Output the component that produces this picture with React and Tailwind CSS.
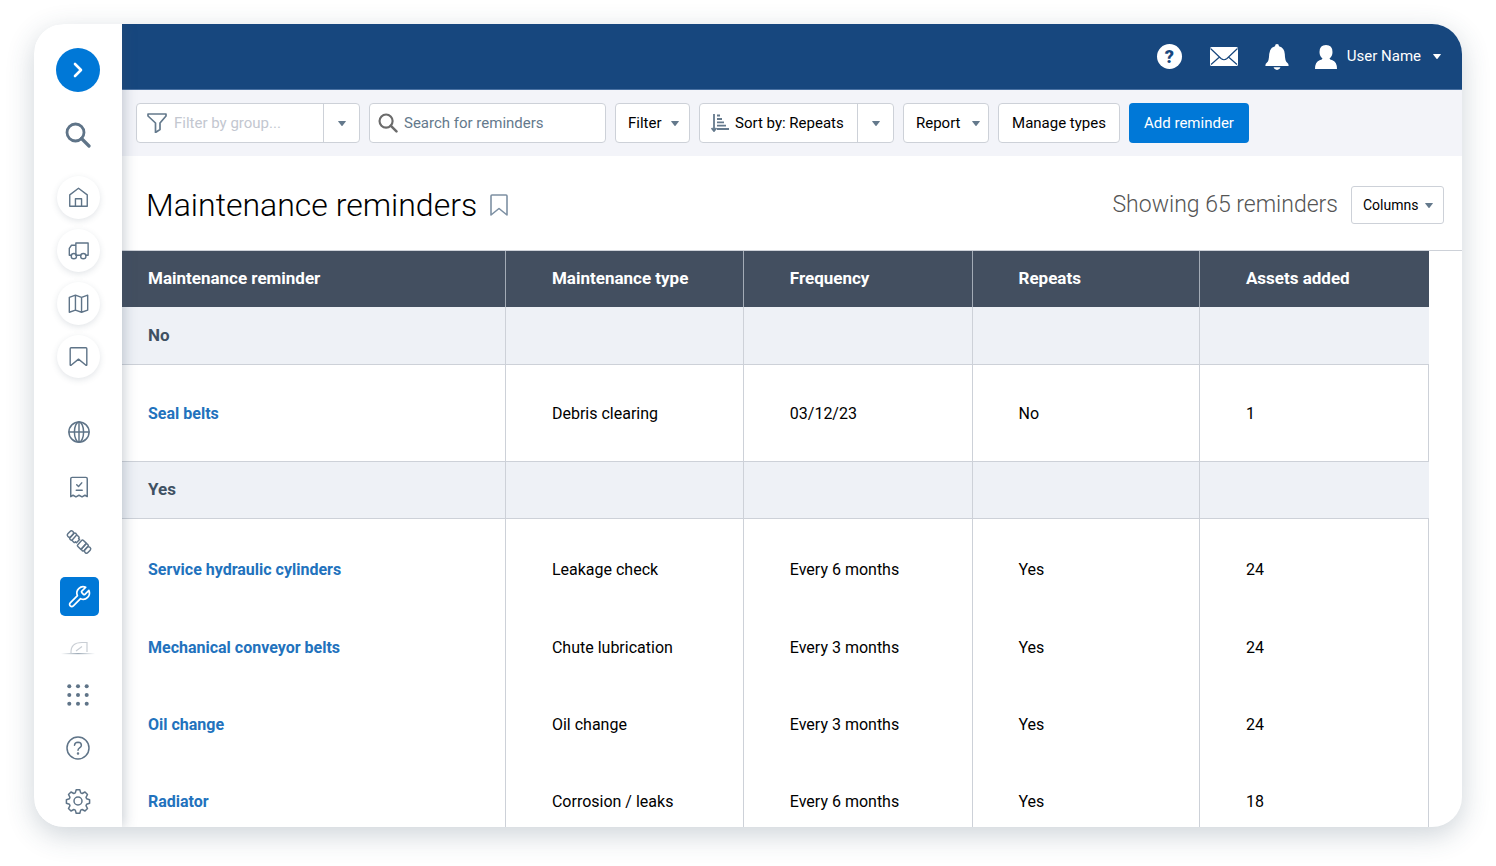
import React from "react";

const topNav = ["home", "truck", "map", "bookmark"];
const midNav = ["globe", "receipt", "plug", "wrench"];
const bottomNav = ["grid", "help", "gear"];

const labels = {
  home: "Home",
  truck: "Vehicles",
  map: "Map",
  bookmark: "Bookmarks",
  globe: "Global",
  receipt: "Compliance",
  plug: "Integrations",
  wrench: "Maintenance",
  grid: "Apps",
  help: "Help",
  gear: "Settings",
};

const icons = {
  home: (
    <>
      <path d="M2 9 12 1.5 22 9v13H2z" />
      <path d="M8.500 22v-8.500h7V22" />
    </>
  ),
  truck: (
    <>
      <path d="M9 17.500V3.500h14v14h-2.500M3.700 17.500H1.500V9.500L4 6h5M9.500 17.500h5" />
      <circle cx="6.700" cy="18.500" r="3" />
      <circle cx="17.500" cy="18.500" r="3" />
    </>
  ),
  map: (
    <path d="M1.500 5v17l7-2.500 7 2.500 7-2.500V2.500L15.500 5l-7-2.500zM8.500 2.500v17M15.500 5v17" />
  ),
  bookmark: <path d="M2.500 3q0-1 1-1h17q1 0 1 1v18.500q0 1-1 .500L12 15l-8.500 7q-1 .500-1-.500z" />,
  globe: (
    <>
      <circle cx="12" cy="12" r="11" />
      <ellipse cx="12" cy="12" rx="5" ry="11" />
      <path d="M1 12h22M12 1v22" />
    </>
  ),
  receipt: (
    <>
      <path d="M3 22.500V3q0-1.500 1.500-1.500h15Q21 1.500 21 3v19.500l-2.500-1.500-3.200 1.800L12 21l-3.300 1.800L5.500 21z" />
      <path d="m9.500 9.500 2 2 3.500-4M9 15.500h6.500" />
    </>
  ),
  plug: (
    <g transform="rotate(43 12 12)">
      <rect x="-3" y="8.200" width="4.500" height="7.600" rx="2" />
      <rect x="1.500" y="7.500" width="3.500" height="9" rx="1.500" />
      <path d="M5 8h3q1 0 1 1v.5h1.500v5H9v.5q0 1-1 1H5" />
      <path d="M19 7.500h-4.500q-1.500 0-1.500 1.500v6q0 1.500 1.500 1.500H19z" />
      <rect x="19" y="7.500" width="3.500" height="9" rx="1.500" />
      <rect x="22.500" y="8.200" width="4.500" height="7.600" rx="2" />
    </g>
  ),
  wrench: (
    <path
      transform="translate(-1.700 -1.500) scale(1.140)"
      d="M14.700 6.300a1 1 0 0 0 0 1.400l1.600 1.600a1 1 0 0 0 1.400 0l3.770-3.770a6 6 0 0 1-7.940 7.940l-6.910 6.910a2.120 2.120 0 0 1-3-3l6.910-6.910a6 6 0 0 1 7.940-7.940l-3.760 3.760z"
    />
  ),
  grid: (
    <g fill="currentColor" stroke="none">
      {[2.500, 12, 21.500].map((y) =>
        [2.500, 12, 21.500].map((x) => <circle key={`${x}-${y}`} cx={x} cy={y} r="2.200" />)
      )}
    </g>
  ),
  help: (
    <>
      <circle cx="12" cy="12" r="11" />
      <path d="M8.500 9.200Q8.800 6.200 12 6.200q3.400.1 3.400 3 0 1.500-1.800 2.600Q12 12.800 12 14.300" />
      <circle cx="12" cy="17.500" r=".5" fill="currentColor" />
    </>
  ),
  gear: (
    <>
      <circle cx="12" cy="12" r="4" />
      <path d="M10.200.800h3.600l.9 3.100 1.500.6 2.800-1.500 2.500 2.500L20 8.300l.6 1.500 3 .900v3.600l-3 .9-.6 1.500 1.500 2.800-2.500 2.500-2.800-1.500-1.500.6-.9 3.100h-3.600l-.9-3.100-1.500-.6L5 22l-2.500-2.500L4 16.700l-.6-1.500-3-.9v-3.600l3-.9.6-1.500-1.500-2.800L5 3l2.800 1.500 1.500-.6z" />
    </>
  ),
};

const Icon = ({ name, className, strokeWidth = 1.6 }) => (
  <svg
    viewBox="0 0 24 24"
    className={className}
    fill="none"
    stroke="currentColor"
    strokeWidth={strokeWidth}
    strokeLinejoin="round"
    strokeLinecap="round"
    overflow="visible"
    aria-hidden="true"
  >
    {icons[name]}
  </svg>
);

const Search = ({ className }) => (
  <svg viewBox="0 0 26 26" className={className} fill="none" stroke="currentColor" aria-hidden="true">
    <circle cx="10.500" cy="10.500" r="8.500" strokeWidth="2.800" />
    <path d="m16.500 16.500 7.500 7.500" strokeWidth="3.200" strokeLinecap="round" />
  </svg>
);

const Caret = ({ className = "text-[#64798c]" }) => (
  <svg viewBox="0 0 8 5" className={`h-[5px] w-2 shrink-0 ${className}`} fill="currentColor" aria-hidden="true">
    <path d="M.5 0h7q.6 0 .3.500L4.500 4.700q-.5.500-1 0L.2.500Q0 0 .5 0z" />
  </svg>
);

const Sidebar = () => (
  <aside className="relative z-10 flex w-[88px] shrink-0 flex-col items-center bg-white pt-6 text-[#5f7488] shadow-[2px_0_12px_rgba(60,80,100,0.28)]">
    <button
      aria-label="Expand menu"
      className="flex h-11 w-11 shrink-0 items-center justify-center rounded-full bg-[#0078d7] text-white"
    >
      <svg viewBox="0 0 10 16" className="h-4 w-[10px]" fill="none" stroke="currentColor" strokeWidth="2.600" strokeLinecap="round" strokeLinejoin="round">
        <path d="m2 2 6 6-6 6" />
      </svg>
    </button>
    <button aria-label="Search" className="mt-[30px] shrink-0">
      <Search className="h-[26px] w-[26px]" />
    </button>
    <nav aria-label="Main" className="mt-7 flex flex-col gap-[10px]">
      {topNav.map((name) => (
        <a
          key={name}
          href="#"
          aria-label={labels[name]}
          className="flex h-[43px] w-[43px] items-center justify-center rounded-full bg-white shadow-[0_2px_6px_rgba(60,80,100,0.15)]"
        >
          <Icon name={name} className="h-[21px] w-[21px]" />
        </a>
      ))}
    </nav>
    <nav aria-label="Tools" className="mt-[34px] ml-[2px] flex flex-col gap-4">
      {midNav.map((name) => (
        <a
          key={name}
          href="#"
          aria-label={labels[name]}
          className={
            name === "wrench"
              ? "flex h-[39px] w-[39px] items-center justify-center rounded-[5px] bg-[#0078d7] text-white"
              : "flex h-[39px] w-[39px] items-center justify-center"
          }
        >
          <Icon name={name} className="h-[22px] w-[22px]" />
        </a>
      ))}
    </nav>
    <svg viewBox="0 0 34 14" className="mt-[25px] h-[14px] w-[34px] shrink-0" fill="none" aria-hidden="true">
      <defs>
        <linearGradient id="edge">
          <stop offset="0" stopColor="#5f7488" stopOpacity="0" />
          <stop offset=".5" stopColor="#5f7488" stopOpacity=".6" />
          <stop offset="1" stopColor="#5f7488" stopOpacity="0" />
        </linearGradient>
      </defs>
      <path d="M10 12Q9.500 1.500 21 1.500h5V11M15 10l6-4.500" stroke="#c9ced4" strokeWidth="1.200" />
      <rect y="12" width="34" height="1.200" fill="url(#edge)" />
    </svg>
    <nav aria-label="Support" className="mt-7 flex flex-col gap-[29px]">
      {bottomNav.map((name) => (
        <a key={name} href="#" aria-label={labels[name]}>
          <Icon name={name} className={name === "grid" ? "m-[1px] h-[22px] w-[22px]" : "h-6 w-6"} strokeWidth={1.5} />
        </a>
      ))}
    </nav>
  </aside>
);

const Header = () => (
  <header className="flex h-[66px] shrink-0 items-center justify-end border-b border-[#4a72a3] bg-[#17477e] pr-[21px] text-white">
    <button aria-label="Help" className="flex h-[25px] w-[25px] items-center justify-center rounded-full bg-white text-lg font-black text-[#17477e]">
      ?
    </button>
    <button aria-label="Messages" className="ml-7">
      <svg viewBox="0 0 28 19" className="h-[19px] w-7">
        <rect width="28" height="19" rx="1.500" fill="#fff" />
        <path d="m.5 1.500 10.500 10q3 2.500 6 0l10.500-10M1 17.500 9.500 10M27 17.500 18.500 10" fill="none" stroke="#17477e" strokeWidth="1.200" />
      </svg>
    </button>
    <button aria-label="Notifications" className="ml-[27px]">
      <svg viewBox="0 0 24 26" className="h-[26px] w-6" fill="#fff">
        <path d="M12 0q2 0 2 2.300 5.500 1.500 5.800 7.700.2 7 2.200 8.500 2 1.500 1.500 3.500H.5Q0 20 2 18.500 4 17 4.200 10 4.500 3.800 10 2.300 10 0 12 0zM8.500 23.300h7q-.8 2.700-3.500 2.700t-3.500-2.700z" />
      </svg>
    </button>
    <button className="ml-[26px] flex items-center text-[15px]">
      <svg viewBox="0 0 22 24" className="h-6 w-[22px]" fill="#fff" aria-hidden="true">
        <path d="M11 0q6.500 0 6.500 7 0 4-3 6.500 0 1 3 1.800 4.500 1.700 4.500 8.700H0q0-7 4.500-8.700 3-.8 3-1.800-3-2.500-3-6.500 0-7 6.500-7z" />
      </svg>
      <span className="ml-[10px]">User Name</span>
      <Caret className="ml-3 text-white" />
    </button>
  </header>
);

const box = "flex h-10 items-center rounded-[4px] border border-[#cdd1d8] bg-white";

const Toolbar = () => (
  <div className="flex h-[66px] shrink-0 items-center gap-[9px] bg-[#f3f4f9] pl-[14px] pr-5 text-[15px] text-black">
    <div className={`${box} w-56`}>
      <svg viewBox="0 0 20 20" className="ml-[10px] h-5 w-5 shrink-0 text-[#64798c]" fill="none" stroke="currentColor" strokeWidth="1.700" strokeLinejoin="round" aria-hidden="true">
        <path d="M1 1h18v2l-6 7v6.500L8.500 19.500V10L1 3z" />
      </svg>
      <input
        aria-label="Filter by group"
        placeholder="Filter by group..."
        className="ml-[7px] min-w-0 flex-1 bg-transparent outline-none placeholder:text-[#c3c7d0]"
      />
      <button aria-label="Choose group" className="flex h-full w-9 items-center justify-center border-l border-[#cdd1d8]">
        <Caret />
      </button>
    </div>
    <div className={`${box} w-[237px]`}>
      <Search className="ml-2 h-5 w-5 shrink-0 text-[#6b6b6b]" />
      <input
        type="search"
        aria-label="Search for reminders"
        placeholder="Search for reminders"
        className="ml-[6px] min-w-0 flex-1 bg-transparent outline-none placeholder:text-[#64798c]"
      />
    </div>
    <button className={`${box} w-[75px] justify-between pl-3 pr-[10px]`}>
      Filter
      <Caret />
    </button>
    <div className={`${box} w-[195px]`}>
      <button className="flex h-full flex-1 items-center whitespace-nowrap pl-[11px]">
        <svg viewBox="0 0 18 18" className="mr-[6px] h-[18px] w-[18px] text-[#64798c]" stroke="currentColor" strokeWidth="1.800" fill="none" aria-hidden="true">
          <path d="M3 0v16M.5 14 3 17l2.500-3M6 1.500h3M6 5h5M6 8.300h7M6 11.600h9M6 15h12" />
        </svg>
        Sort by: Repeats
      </button>
      <button aria-label="Sort options" className="flex h-full w-9 items-center justify-center border-l border-[#cdd1d8]">
        <Caret />
      </button>
    </div>
    <button className={`${box} w-[86px] justify-between pl-3 pr-2`}>
      Report
      <Caret />
    </button>
    <button className={`${box} w-[122px] justify-center whitespace-nowrap`}>Manage types</button>
    <button className="h-10 w-[120px] whitespace-nowrap rounded-[4px] bg-[#0078d7] text-white">Add reminder</button>
  </div>
);

const columns = ["Maintenance reminder", "Maintenance type", "Frequency", "Repeats", "Assets added"];

const groups = [
  { name: "No", rows: [["Seal belts", "Debris clearing", "03/12/23", "No", "1"]] },
  {
    name: "Yes",
    rows: [
      ["Service hydraulic cylinders", "Leakage check", "Every 6 months", "Yes", "24"],
      ["Mechanical conveyor belts", "Chute lubrication", "Every 3 months", "Yes", "24"],
      ["Oil change", "Oil change", "Every 3 months", "Yes", "24"],
      ["Radiator", "Corrosion / leaks", "Every 6 months", "Yes", "18"],
    ],
  },
];

const rowHeight = (index, count) => {
  if (count === 1) return "h-24 pt-[2px]";
  return index === 0 ? "h-[90px] pt-3" : "h-[77px]";
};

const ReminderTable = () => (
  <div className="border-t border-[#cdd1d8] pr-[33px]">
    <table className="w-full table-fixed border-separate border-spacing-0 text-left text-base text-black">
      <colgroup>
        <col className="w-[29.3%]" />
        <col className="w-[18.2%]" />
        <col className="w-[17.5%]" />
        <col className="w-[17.4%]" />
        <col className="w-[17.6%]" />
      </colgroup>
      <thead>
        <tr className="bg-[#434f60] text-[17px] text-white">
          {columns.map((title, i) => (
            <th key={title} scope="col" className={i === 0 ? "h-14 pl-[26px] font-bold" : "h-14 border-l border-[#a3abb6] pl-[46px] font-bold"}>
              {title}
            </th>
          ))}
        </tr>
      </thead>
      {groups.map((group, g) => (
        <tbody key={group.name}>
          <tr className="bg-[#eef1f6] text-[17px] text-[#3f5163]">
            <th scope="rowgroup" className={`h-[58px] border-b border-[#cdd1d8] pl-[26px] font-bold ${g > 0 ? "border-t" : ""}`}>
              {group.name}
            </th>
            {columns.slice(1).map((title) => (
              <td key={title} className={`border-b border-l border-[#cdd1d8] ${g > 0 ? "border-t" : ""}`} />
            ))}
          </tr>
          {group.rows.map((row, r) => (
            <tr key={row[0]}>
              {row.map((cell, i) => (
                <td
                  key={columns[i]}
                  className={`border-[#cdd1d8] ${rowHeight(r, group.rows.length)} ${i === 0 ? "pl-[26px]" : "border-l pl-[46px]"} ${i === 4 ? "border-r" : ""}`}
                >
                  {i === 0 ? (
                    <a href="#" className="font-bold text-[#2272bd]">
                      {cell}
                    </a>
                  ) : (
                    cell
                  )}
                </td>
              ))}
            </tr>
          ))}
        </tbody>
      ))}
    </table>
  </div>
);

const App = () => {
  return (
    <div className="h-screen overflow-hidden bg-white px-[34px] pb-[39px] pt-6 font-[Roboto,sans-serif]">
      <div className="flex h-full overflow-hidden rounded-[30px] bg-white shadow-[0_8px_28px_rgba(50,75,95,0.24)]">
        <Sidebar />
        <main className="flex min-w-0 flex-1 flex-col">
          <Header />
          <Toolbar />
          <div className="flex h-[94px] shrink-0 items-center pl-6 pr-[18px] pt-1">
            <h1 className="text-[32px] font-light text-black">Maintenance reminders</h1>
            <button aria-label="Bookmark this page" className="ml-[13px] text-[#7d90a3]">
              <svg viewBox="0 0 18 22" className="h-[22px] w-[18px]" fill="none" stroke="currentColor" strokeWidth="1.600" strokeLinejoin="round">
                <path d="M1 2q0-1 1-1h14q1 0 1 1v19l-8-6.500L1 21z" />
              </svg>
            </button>
            <p className="ml-auto text-[23px] font-light text-[#555]">Showing 65 reminders</p>
            <button className="ml-[13px] flex h-[38px] w-[93px] items-center justify-between rounded-[3px] border border-[#cdd1d8] bg-white pl-[11px] pr-[10px] text-sm text-black">
              Columns
              <Caret />
            </button>
          </div>
          <ReminderTable />
        </main>
      </div>
    </div>
  );
};

export default App;
